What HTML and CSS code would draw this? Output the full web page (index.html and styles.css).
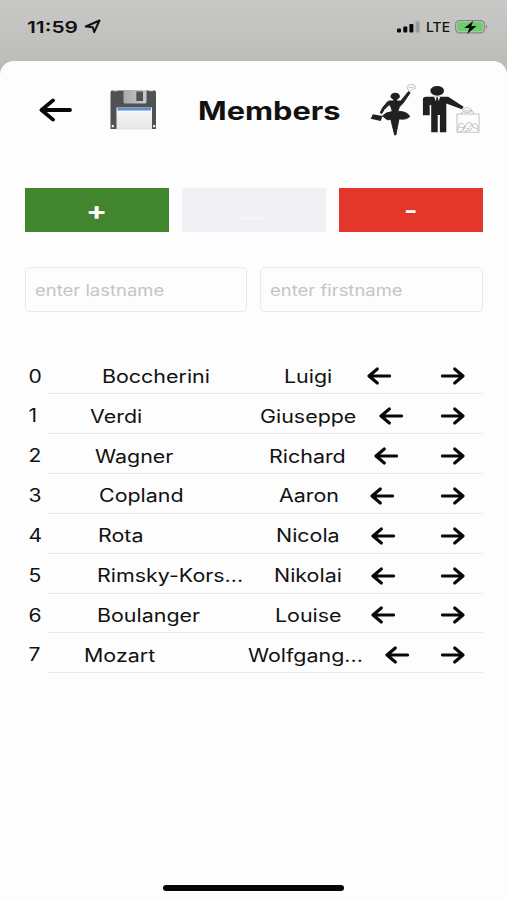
FILE: index.html
```
<!DOCTYPE html>
<html lang="en">
<head>
<meta charset="utf-8">
<title>Members</title>
<link rel="stylesheet" href="styles.css">
</head>
<body>
<svg class="defs" width="0" height="0" aria-hidden="true">
  <symbol id="arrow" viewBox="0 0 24 18"><path d="M22.6 9H2.4M10.3 2L2 9l8.3 7"/></symbol>
</svg>
<div class="status">
  <span class="time wide">11:59</span>
  <svg class="loc" width="18" height="15" viewBox="0 0 18 15"><path d="M1.8 7.5L15.5 1.5 10.2 13 8.8 8.2z"/></svg>
  <svg class="signal" width="24" height="12" viewBox="0 0 24 12"><rect x="0" y="7.5" width="4" height="4" rx="1"/><rect x="6.3" y="5.5" width="4" height="6" rx="1"/><rect x="12.4" y="3" width="4" height="8.5" rx="1"/><rect class="dim" x="18.6" y="0.5" width="4" height="11" rx="1"/></svg>
  <span class="lte wide">LTE</span>
  <svg class="battery" width="34" height="16" viewBox="0 0 34 16"><rect class="shell" x=".7" y="1.7" width="28.6" height="12.2" rx="3.6"/><rect class="charge" x="2.4" y="3.3" width="25.3" height="9" rx="2"/><path class="cap" d="M30.8 5.8q3 2 0 4z"/><path class="bolt" d="M18.4 1.7L9.3 9h5.1l-2.2 5.9L21.5 7h-5.2z"/></svg>
</div>
<main class="sheet">
  <header class="header">
    <svg class="arrow back" viewBox="0 0 34 24"><path d="M31 12H3.5M14 2.4L2.5 12 14 21.6"/></svg>
    <svg class="floppy" width="47" height="40" viewBox="0 0 47 40">
      <defs><linearGradient id="metal"><stop offset="0" stop-color="#a9abaa"/><stop offset="1" stop-color="#c8caca"/></linearGradient><linearGradient id="label" x2="0" y2="1"><stop offset="0" stop-color="#f8f8f9"/><stop offset="1" stop-color="#e5e6e7"/></linearGradient></defs>
      <path fill="#505152" d="M1.5 .5H45L46 2V39H.5V2z"/>
      <path fill="#e7e7e7" d="M3.5.3h4v1h-4zM39 .3h4v1h-4z"/>
      <path fill="url(#metal)" d="M13.5 0H36.5V12q0 1.5-2 1.5h-19q-2 0-2-1.5z"/>
      <path fill="#505152" d="M26.3 1.5H33v9.5h-6.7z"/>
      <path fill="url(#label)" d="M6.5 17.5H42V39.5H6.5z"/>
      <path fill="#5b90d2" d="M7.5 17.8H41v2.7H7.5z"/>
      <path fill="#fff" d="M1.8 35h2v2.3h-2zM43.2 35h2v2.3h-2z"/>
    </svg>
    <h1 class="title"><span class="wide">Members</span></h1>
    <svg class="people" width="110" height="54" viewBox="0 0 110 54">
      <g class="ink">
        <ellipse cx="25.2" cy="14.3" rx="4.7" ry="3.5"/>
        <path class="dancer" d="M23.8 17h2.8v2h4.2L38.4 9.6l1.8 1.2-7.6 11-3.3 3.2-1.4 4.2q10 .4 11.8 5.4-2.8 2.8-7 2.6l-3.7-.3-3.1 16h-1.3L20.8 37.4l-3.6.4-4.7-3.9q3.5-3.8 9.8-4.3L21 25.1l-1.8-2.6-5 5-2.4 4-1.6-.8 2.4-5 5-6q.8-.8 2-.8h4.2z"/>
        <path d="M2.8 32.2l9.8 1.8-1.9 4.9L.7 36.7z"/>
        <ellipse cx="67.2" cy="8.8" rx="6.8" ry="4.9"/>
        <path d="M56 14.8h22.2l15.4 10-1.7 2.4-15.6-5.7v28.7h-6.4V33h-2.2v17.2h-6.5V23h-1.5v10.2h-6.8V17.6q0-2.8 3.1-2.8z"/>
      </g>
      <path fill="#fff" d="M64.2 14.8h6l-1.5 4h-3.2z"/><path class="ink" d="M66.4 15.2h1.5l.8 5.5-1.6 1.8-1.4-1.8z"/>
      <g class="sketch">
        <path d="M39.5 9.5L36.6 5.2l2-2.2 2.8-.5 3 .5 1.5 2.8-3.8 2zM38.6 5l2.8.6 2.6-.8"/>
        <path d="M87 32h22V50.3H87zM90 32l5-3.3 7.6.3 1 3M92.5 27.5l4.3-2.2 5.3 2.7-1.7 2.2-5.6.2z"/>
        <path d="M87.5 48l1.5-6 3.2-1 2.4 2.4-1 4.2-3.8 2.5zM93 48.5l3.8-7 3.7-1.2 2.5 4.2-2.7 3.8-6 .9M99 45l6-3.8 2.8 2.5v5.6M89 45l5 1m2 0l4 1m3-2l4 2"/>
      </g>
    </svg>
  </header>
  <div class="actions">
    <button class="btn add"><span>+</span></button>
    <button class="btn blank" aria-label="Edit"><span></span></button>
    <button class="btn remove"><span>-</span></button>
  </div>
  <div class="fields">
    <div class="field"><span class="wide">enter lastname</span></div>
    <div class="field"><span class="wide">enter firstname</span></div>
  </div>
  <div class="list">
    <div class="row" style="--last:101.5;--first:284;--left:366.5"><span class="num">0</span><div class="cells"><span class="last">Boccherini</span><span class="first">Luigi</span><svg class="arrow"><use href="#arrow"/></svg><svg class="arrow next"><use href="#arrow"/></svg></div></div>
    <div class="row" style="--last:90;--first:259.5;--left:379"><span class="num">1</span><div class="cells"><span class="last">Verdi</span><span class="first">Giuseppe</span><svg class="arrow"><use href="#arrow"/></svg><svg class="arrow next"><use href="#arrow"/></svg></div></div>
    <div class="row" style="--last:95;--first:269;--left:374"><span class="num">2</span><div class="cells"><span class="last">Wagner</span><span class="first">Richard</span><svg class="arrow"><use href="#arrow"/></svg><svg class="arrow next"><use href="#arrow"/></svg></div></div>
    <div class="row" style="--last:98.5;--first:278.5;--left:369.5"><span class="num">3</span><div class="cells"><span class="last">Copland</span><span class="first">Aaron</span><svg class="arrow"><use href="#arrow"/></svg><svg class="arrow next"><use href="#arrow"/></svg></div></div>
    <div class="row" style="--last:97.5;--first:276;--left:370.5"><span class="num">4</span><div class="cells"><span class="last">Rota</span><span class="first">Nicola</span><svg class="arrow"><use href="#arrow"/></svg><svg class="arrow next"><use href="#arrow"/></svg></div></div>
    <div class="row" style="--last:96.5;--first:274;--left:371"><span class="num">5</span><div class="cells"><span class="last">Rimsky-Kors...</span><span class="first">Nikolai</span><svg class="arrow"><use href="#arrow"/></svg><svg class="arrow next"><use href="#arrow"/></svg></div></div>
    <div class="row" style="--last:97;--first:274.5;--left:371"><span class="num">6</span><div class="cells"><span class="last">Boulanger</span><span class="first">Louise</span><svg class="arrow"><use href="#arrow"/></svg><svg class="arrow next"><use href="#arrow"/></svg></div></div>
    <div class="row" style="--last:83.5;--first:247.5;--left:385"><span class="num">7</span><div class="cells"><span class="last">Mozart</span><span class="first">Wolfgang...</span><svg class="arrow"><use href="#arrow"/></svg><svg class="arrow next"><use href="#arrow"/></svg></div></div>
  </div>
  <div class="home"></div>
</main>
</body>
</html>
```
FILE: styles.css
```
* { box-sizing: border-box; }
body {
  margin: 0;
  width: 507px;
  height: 900px;
  overflow: hidden;
  display: flex;
  flex-direction: column;
  font-family: Inter, "Liberation Sans", sans-serif;
  color: #111;
  background: linear-gradient(#c8c9c6, #b8bab6 80px);
}
.defs { display: block; height: 0; flex: none; }
svg { flex: none; display: block; }
.wide { display: inline-block; transform-origin: left center; white-space: nowrap; }
.status {
  height: 61px;
  flex: none;
  display: flex;
  align-items: center;
  padding: 0 18px 8px 27px;
}
.time { width: 57px; font-size: 16.5px; font-weight: 600; transform: scaleX(1.27); }
.loc { fill: none; stroke: #111; stroke-width: 2; stroke-linejoin: round; margin-right: auto; }
.signal { fill: #080808; margin-right: 5px; }
.signal .dim { fill: #999b98; }
.lte { width: 29px; font-size: 13.5px; font-weight: 500; transform: scaleX(1.03); }
.battery .shell { fill: none; stroke: #858784; stroke-width: 1.2; }
.battery .charge { fill: #67cf68; }
.battery .cap { fill: #858784; }
.battery .bolt { fill: #080808; }
.sheet {
  flex: 1;
  display: flex;
  flex-direction: column;
  padding: 0 24.5px 0 25px;
  background: #fdfdfd;
  border-radius: 14px 14px 0 0;
}
.header { display: flex; align-items: flex-start; height: 127px; padding: 23px 0 0 14px; }
.arrow { width: 24px; height: 18px; fill: none; stroke: #080808; stroke-width: 3.1; stroke-linecap: round; stroke-linejoin: round; }
.back { width: 34px; height: 24px; margin-top: 14px; stroke-width: 3.8; }
.floppy { margin: 6px 0 0 37px; }
.title { margin: 11px 0 0 41px; width: 172px; font-size: 25px; line-height: 32px; font-weight: 700; }
.title .wide { transform: scaleX(1.23); }
.people { margin-top: -2px; }
.ink { fill: #202020; }
.dancer { stroke: #202020; stroke-width: .9; stroke-linejoin: round; }
.sketch { fill: none; stroke: #aaa; stroke-width: .7; }
.actions { display: grid; grid-template-columns: repeat(3, 1fr); gap: 13.5px; height: 44px; }
.btn {
  border: 0;
  padding: 0;
  display: flex;
  align-items: center;
  justify-content: center;
  font: 700 24px/44px Inter, sans-serif;
  color: #fff;
}
.add { background: #41862f; }
.add span { font-size: 25px; transform: translateY(1px) scaleX(1.25); }
.blank { background: #f1f0f5; }
.blank span { width: 27px; height: 2px; margin-top: 16px; background: #f5f4f8; }
.remove { background: #e3372c; }
.remove span { transform: translateY(1px) scaleX(1.2); }
.fields { display: grid; grid-template-columns: 1fr 1fr; gap: 13px; height: 45px; margin-top: 35px; }
.field {
  display: flex;
  align-items: center;
  padding: 1px 0 0 9px;
  border: 1px solid #e9e9e9;
  border-radius: 5px;
  color: #c4c4c6;
  font-size: 15.5px;
}
.field .wide { transform: scaleX(1.19); }
.list { margin-top: 42.5px; }
.row { display: flex; height: 39.85px; font-size: 18px; }
.num { width: 23px; padding-left: 3px; line-height: 44px; transform: scaleX(1.17); transform-origin: left center; }
.cells { flex: 1; display: flex; align-items: center; padding: 5px 17.5px 0 0; border-bottom: 1px solid #ebebec; }
.last, .first { flex: none; white-space: nowrap; transform: scaleX(1.19); transform-origin: left center; }
.last { width: calc((var(--first) - var(--last)) * 1px); margin-left: calc((var(--last) - 48) * 1px); }
.first { width: calc((var(--left) - var(--first)) * 1px); }
.next { margin-left: auto; transform: scaleX(-1); }
.home { width: 181px; height: 6px; margin: auto auto 9px; border-radius: 3px; background: #050505; }
```
